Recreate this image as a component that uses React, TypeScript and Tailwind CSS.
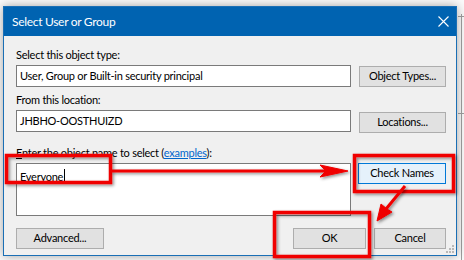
import React from "react";

const font = { fontFamily: 'Lato, "Noto Sans", Arial, sans-serif' };

function Field({ value }: { value: string }) {
  return (
    <div className="flex h-[22px] w-[335px] items-center border border-[#7a7a7a] bg-white px-[3px] text-black">
      {value}
    </div>
  );
}

function Button({ label, w, focused }: { label: string; w: string; focused?: boolean }) {
  return (
    <div
      className={`flex h-[21px] items-center justify-center border text-black ${w} ${
        focused ? "border-[#0078d7] bg-[#e5f1fb]" : "border-[#adadad] bg-[#e1e1e1]"
      }`}
    >
      {label}
    </div>
  );
}

function Annotations() {
  return (
    <svg className="pointer-events-none absolute left-0 top-0" width="464" height="260" viewBox="0 0 464 260">
      <defs>
        <filter id="sh" x="-20%" y="-20%" width="140%" height="140%">
          <feDropShadow dx="1.5" dy="1.5" stdDeviation="1.5" floodColor="#000" floodOpacity="0.45" />
        </filter>
      </defs>
      <g filter="url(#sh)" fill="none" stroke="#f00000" strokeWidth="3.5">
        <rect x="6.5" y="155.5" width="104" height="27" />
        <rect x="354.5" y="155.5" width="99" height="36" />
        <rect x="274.5" y="212.5" width="95" height="44" />
      </g>
      <g filter="url(#sh)" fill="#f00000" stroke="#f00000">
        <line x1="111" y1="171" x2="326" y2="171" strokeWidth="3" />
        <polygon points="320,165 348,171 320,177 326,171" strokeWidth="1" />
        <line x1="405" y1="186" x2="386" y2="209" strokeWidth="3" />
        <polygon points="392,212 377,221 381,204 387,209" strokeWidth="1" />
      </g>
    </svg>
  );
}

export default function App() {
  return (
    <div className="relative h-[260px] w-[464px] overflow-hidden bg-[#fbfbfb]" style={font}>
      <div className="absolute left-[461px] top-[14px] h-[246px] w-px bg-[#a0a0a0]" />
      <div className="absolute left-[458px] top-[16px] h-px w-[6px] bg-[#a0a0a0]" />
      <div className="absolute left-[458px] top-[113px] h-px w-[6px] bg-[#a0a0a0]" />

      <div className="relative ml-[3px] mt-[6px] flex h-[250px] w-[454px] flex-col border border-[#1a6fb5] bg-[#f0f0f0] shadow-[0_0_10px_rgba(0,0,0,0.35)]">
        <div className="flex h-[29px] items-center justify-between bg-[#0063b1] pl-[8px] pr-[6px] text-[12px] tracking-[-0.3px] text-white">
          <span>Select User or Group</span>
          <svg width="11" height="11" viewBox="0 0 11 11" className="mr-[1px]">
            <path d="M0.5 0.5 L10.5 10.5 M10.5 0.5 L0.5 10.5" stroke="#fff" strokeWidth="1.1" />
          </svg>
        </div>

        <div className="flex flex-col pl-[12px] pr-[10px] pt-[11px] text-[11px] tracking-[-0.25px] text-black">
          <div className="h-[16px] leading-[16px]">Select this object type:</div>
          <div className="mt-[2px] flex items-start justify-between">
            <Field value="User, Group or Built-in security principal" />
            <div className="mt-px">
              <Button label="Object Types..." w="w-[87px]" />
            </div>
          </div>

          <div className="mt-[5px] h-[16px] leading-[16px]">From this location:</div>
          <div className="mt-[2px] flex items-start justify-between">
            <Field value="JHBHO-OOSTHUIZD" />
            <div className="mt-[2px]">
              <Button label="Locations..." w="w-[87px]" />
            </div>
          </div>

          <div className="mt-[12px] h-[16px] leading-[16px]">
            <span className="underline">E</span>nter the object name to select (
            <span className="text-[#0066cc] underline">examples</span>):
          </div>
          <div className="mt-[2px] flex items-start justify-between">
            <div className="h-[53px] w-[335px] border border-[#7a7a7a] bg-white px-[3px] pt-[3px] leading-[16px]">
              Everyone<span className="ml-px inline-block h-[14px] w-px translate-y-[2px] bg-black" />
            </div>
            <Button label="Check Names" w="w-[88px]" focused />
          </div>

          <div className="mt-[12px] flex items-center justify-between">
            <Button label="Advanced..." w="w-[88px]" />
            <div className="flex gap-[8px]">
              <Button label="OK" w="w-[73px]" />
              <Button label="Cancel" w="w-[72px]" />
            </div>
          </div>
        </div>

        <svg className="absolute bottom-[2px] right-[2px]" width="8" height="8" viewBox="0 0 8 8">
          <g fill="#b8b8b8">
            <rect x="6" y="0" width="2" height="2" />
            <rect x="3" y="3" width="2" height="2" />
            <rect x="6" y="3" width="2" height="2" />
            <rect x="0" y="6" width="2" height="2" />
            <rect x="3" y="6" width="2" height="2" />
            <rect x="6" y="6" width="2" height="2" />
          </g>
        </svg>
      </div>

      <Annotations />
    </div>
  );
}
